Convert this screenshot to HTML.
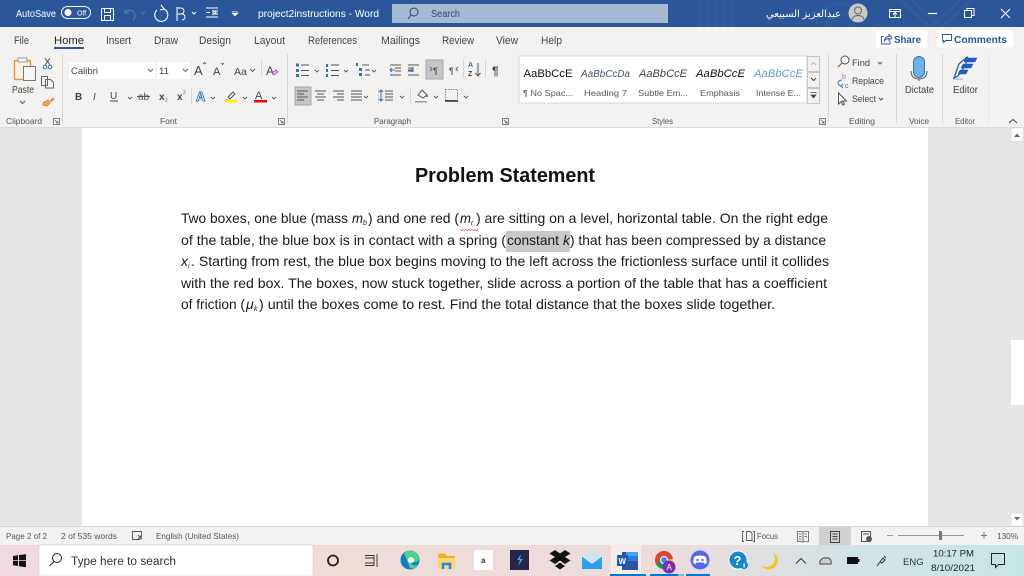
<!DOCTYPE html>
<html><head><meta charset="utf-8"><style>
html,body{margin:0;padding:0;background:#fff;width:1024px;height:576px;overflow:hidden}
svg{display:block;font-family:"Liberation Sans","Noto Sans CJK SC",sans-serif}
.d{font-size:14px;fill:#1a1a1a}
.r{font-size:10px;fill:#444}
.g{font-size:8px;fill:#555}
.s{font-size:8.5px;fill:#555}
.st{font-size:11px}
</style></head><body>
<svg width="1024" height="576" viewBox="0 0 1024 576" xmlns="http://www.w3.org/2000/svg">
<defs><linearGradient id="tk" x1="0" x2="1" y1="0" y2="0">
<stop offset="0" stop-color="#f0d9e2"/><stop offset=".3" stop-color="#eedcd6"/><stop offset=".66" stop-color="#ecdcdc"/><stop offset=".82" stop-color="#d3e2e6"/><stop offset="1" stop-color="#c8e5e6"/></linearGradient></defs>
<!-- background -->
<rect width="1024" height="576" fill="#e6e6e6"/>
<rect x="82" y="127" width="846" height="400" fill="#fff"/>
<!-- title bar -->
<rect width="1024" height="27" fill="#2b579a"/>
<g fill="none" stroke="#2f5c9e" stroke-width="3"><path d="M700 0v27M708 0v27M716 0v27M724 0v27M732 0v27"/><circle cx="840" cy="28" r="14"/><circle cx="840" cy="28" r="24"/><path d="M900 0l30 27M912 0l30 27M960 0l-30 27M972 0l-30 27"/></g>
<text x="16" y="17" font-size="10" fill="#fff" textLength="40" lengthAdjust="spacingAndGlyphs">AutoSave</text>
<rect x="61.500" y="6.500" width="29" height="12" rx="6" fill="none" stroke="#fff"/><circle cx="68" cy="12.500" r="3.500" fill="#fff"/><text x="77" y="15.500" font-size="7" fill="#fff">Off</text>
<g fill="none" stroke="#fff"><rect x="101.500" y="8.500" width="12" height="12"/><rect x="104.500" y="8.500" width="6" height="4"/><rect x="104.500" y="15.500" width="6" height="5"/></g>
<path d="M125 9v4h4M125 13c3-5 10-3 10 3 0 2-1 3-2 4" fill="none" stroke="#5679ad" stroke-width="1.200"/><path d="M141 12l2 2 2-2" fill="none" stroke="#5679ad"/>
<path d="M157 10a6.500 6.500 0 1 0 7-1M161 5l3 4-4 1" fill="none" stroke="#fff" stroke-width="1.100"/>
<path d="M177 7v14M177 8h4a3 3 0 0 1 0 6h-4M180 14h2a3 3 0 0 1 0 6" fill="none" stroke="#fff"/><path d="M192 12l2 2 2-2" fill="none" stroke="#fff"/>
<path d="M206 8h12M206 17h12M206 12.500h4M213 10.500v4l3-2zM214 11h4M214 14h4" fill="none" stroke="#fff"/>
<path d="M232 11.500h6M232 13l3 3 3-3z" fill="#fff" stroke="#fff" stroke-width=".6"/>
<text x="258" y="17" font-size="10" fill="#fff" textLength="121" lengthAdjust="spacingAndGlyphs">project2instructions  -  Word</text>
<rect x="392" y="4" width="276" height="19" fill="#a5b9d3"/>
<circle cx="414" cy="12" r="4" fill="none" stroke="#2b4a78"/><path d="M411 15l-3 4" stroke="#2b4a78"/>
<text x="431" y="17" font-size="10" fill="#2d4a75" textLength="29" lengthAdjust="spacingAndGlyphs">Search</text>
<text x="841" y="17" font-size="10" fill="#fff" textLength="75" lengthAdjust="spacingAndGlyphs" direction="rtl" font-family="'Liberation Sans','DejaVu Sans',sans-serif">عبدالعزيز السبيعي</text>
<circle cx="858" cy="13" r="9.500" fill="#c9c9c9"/><circle cx="858" cy="10.500" r="3.500" fill="none" stroke="#666"/><path d="M852 20c0-6 12-6 12 0" fill="none" stroke="#666"/>
<g fill="none" stroke="#fff"><rect x="889.500" y="9.500" width="11" height="8"/><path d="M889 11.500h11M895 17v-4M893 14.500l2-2 2 2"/><path d="M928 13.500h9" stroke-width="1.200"/><rect x="964.500" y="10.500" width="7" height="7"/><path d="M967 10.500v-2h7v7h-2"/><path d="M1001 9l9 9M1010 9l-9 9" stroke-width="1.100"/></g>
<!-- ribbon -->
<rect y="27" width="1024" height="100" fill="#f3f2f1"/>
<rect y="127" width="1024" height="1" fill="#dcdcdc"/>
<g class="st" fill="#444">
<text x="14" y="44" textLength="15" lengthAdjust="spacingAndGlyphs">File</text>
<text x="54" y="44" textLength="30" lengthAdjust="spacingAndGlyphs" fill="#2a2a2a">Home</text>
<text x="106" y="44" textLength="25" lengthAdjust="spacingAndGlyphs">Insert</text>
<text x="154" y="44" textLength="24" lengthAdjust="spacingAndGlyphs">Draw</text>
<text x="199" y="44" textLength="32" lengthAdjust="spacingAndGlyphs">Design</text>
<text x="254" y="44" textLength="31" lengthAdjust="spacingAndGlyphs">Layout</text>
<text x="308" y="44" textLength="49" lengthAdjust="spacingAndGlyphs">References</text>
<text x="381" y="44" textLength="39" lengthAdjust="spacingAndGlyphs">Mailings</text>
<text x="442" y="44" textLength="32" lengthAdjust="spacingAndGlyphs">Review</text>
<text x="496" y="44" textLength="22" lengthAdjust="spacingAndGlyphs">View</text>
<text x="541" y="44" textLength="21" lengthAdjust="spacingAndGlyphs">Help</text>
</g>
<rect x="54" y="47" width="30" height="2" fill="#2b579a"/>
<!-- share/comments -->
<rect x="875" y="30" width="53" height="18" fill="#fff" stroke="#eee"/>
<path d="M883.500 36.500h-2v7.500h8.500v-3M884.500 41c0-3 1.500-4.500 4.500-4.500v-2l3 3-3 3v-2c-2 0-3.500 1-4.500 2.500z" fill="none" stroke="#2b579a" stroke-width=".9"/>
<text x="894" y="43" font-size="10.500" font-weight="bold" fill="#2b579a" textLength="27" lengthAdjust="spacingAndGlyphs">Share</text>
<rect x="936" y="30" width="78" height="18" fill="#fff" stroke="#eee"/>
<path d="M942.500 34.500h9v6h-6l-2 2v-2h-1z" fill="none" stroke="#2b579a" stroke-width=".9"/>
<text x="954" y="43" font-size="10.500" font-weight="bold" fill="#2b579a" textLength="53" lengthAdjust="spacingAndGlyphs">Comments</text>
<!-- separators -->
<g fill="#d8d7d6"><rect x="62" y="54" width="1" height="69"/><rect x="287" y="54" width="1" height="69"/><rect x="828" y="54" width="1" height="69"/><rect x="896" y="54" width="1" height="69"/><rect x="942" y="54" width="1" height="69"/><rect x="988" y="54" width="1" height="69" fill="#e8e7e6"/></g>
<!-- clipboard -->
<rect x="14.500" y="60.500" width="16" height="19" rx="1" fill="#fbf3e8" stroke="#e8923e" stroke-width="1.400"/><rect x="18" y="58" width="9" height="4" fill="#f3f2f1" stroke="#888" stroke-width=".8"/><rect x="23.500" y="66.500" width="12" height="14" fill="#f6f6f6" stroke="#777"/>
<text x="12" y="93" class="r" textLength="22" lengthAdjust="spacingAndGlyphs">Paste</text><path d="M20 101l2.500 2.500 2.500-2.500" fill="none" stroke="#555"/>
<path d="M45 58l5 7M50 58l-5 7" stroke="#555" fill="none"/><circle cx="45" cy="67" r="1.800" fill="none" stroke="#2e75b6"/><circle cx="50" cy="67" r="1.800" fill="none" stroke="#2e75b6"/>
<path d="M41.500 76.500h6v9h-6zM45.500 79.500h5l3 3v5.500h-8z" fill="#f3f2f1" stroke="#666"/>
<path d="M43 103l5-3 2 3-3 3-4-1zM50 101l3-3 1 1-3 3" fill="#f2a24e" stroke="#d9792a" stroke-width=".8"/>
<text x="6" y="124" class="g" textLength="36" lengthAdjust="spacingAndGlyphs">Clipboard</text>
<g fill="none" stroke="#666" stroke-width=".8"><rect x="53.500" y="118.500" width="6" height="6"/><path d="M55 120l3 3M58 121v2h-2"/><rect x="278.500" y="118.500" width="6" height="6"/><path d="M280 120l3 3M283 121v2h-2"/><rect x="502.500" y="118.500" width="6" height="6"/><path d="M504 120l3 3M507 121v2h-2"/><rect x="819.500" y="118.500" width="6" height="6"/><path d="M821 120l3 3M824 121v2h-2"/></g>
<!-- font -->
<rect x="69" y="62" width="86" height="17" fill="#fff"/><rect x="157" y="62" width="33" height="17" fill="#fff"/>
<text x="71" y="74" font-size="9.500" fill="#444" textLength="27" lengthAdjust="spacingAndGlyphs">Calibri</text>
<text x="159" y="74" font-size="9.500" fill="#444">11</text>
<g fill="none" stroke="#555" stroke-width=".9"><path d="M148 69l2.500 2.500 2.500-2.500M183 69l2.500 2.500 2.500-2.500M250 69l2.500 2.500 2.500-2.500M128 97l2 2 2-2M211 97l2 2 2-2M243 97l2 2 2-2M272 97l2 2 2-2M315 70l2 2 2-2M344 70l2 2 2-2M372 70l2 2 2-2M364 96l2 2 2-2M400 96l2 2 2-2M434 96l2 2 2-2M464 96l2 2 2-2"/></g>
<text x="194" y="75" font-size="13" fill="#444">A</text><path d="M203 64l1.500-1.500 1.500 1.500" fill="none" stroke="#2e75b6"/>
<text x="213" y="75" font-size="11" fill="#444">A</text><path d="M221 63l1.500 1.500 1.500-1.500" fill="none" stroke="#2e75b6"/>
<text x="234" y="75" font-size="10.500" fill="#444">Aa</text>
<rect x="261" y="59" width="1" height="18" fill="#d8d7d6"/>
<text x="266" y="75" font-size="12" fill="#444">A</text><path d="M272 73l4-3 2 2-4 3z" fill="#e0b9e8" stroke="#9a3fb0" stroke-width=".7"/>
<text x="75" y="100" font-size="10" font-weight="bold" fill="#444">B</text>
<text x="93" y="100" font-size="10" font-style="italic" fill="#444">I</text>
<text x="110" y="99" font-size="10" fill="#444">U</text><path d="M110 101h8" stroke="#444"/>
<text x="138" y="100" font-size="10" fill="#555">ab</text><path d="M137 96.500h13" stroke="#555"/>
<text x="159" y="100" font-size="10" font-weight="bold" fill="#444">x</text><text x="165" y="102" font-size="5" fill="#2e75b6">2</text>
<text x="177" y="100" font-size="10" font-weight="bold" fill="#444">x</text><text x="183" y="94" font-size="5" fill="#2e75b6">2</text>
<rect x="191" y="88" width="1" height="16" fill="#d8d7d6"/>
<text x="196" y="101" font-size="13" font-weight="bold" fill="#fff" stroke="#2e75b6" stroke-width=".9">A</text>
<path d="M228 97l5-5 2 2-5 5zM226 100h2" fill="none" stroke="#555"/><rect x="225" y="100" width="12" height="2.500" fill="#ffec00"/>
<text x="255" y="99" font-size="11" fill="#444">A</text><rect x="254" y="100" width="13" height="2.500" fill="#f00"/>
<text x="160" y="124" class="g" textLength="17" lengthAdjust="spacingAndGlyphs">Font</text>
<!-- paragraph -->
<g stroke="#555" fill="none" stroke-width="1">
<path d="M301 65h8M301 70.500h8M301 75.500h8M331 65h8M331 70.500h8M331 75.500h8M362 65h7M365 70h5M365 75h5M390 65h11M395 68h6M395 71h6M390 75h11M408 65h11M408 68h6M408 71h6M408 75h11"/>
</g>
<g fill="#2e75b6"><rect x="296" y="63.500" width="3" height="3"/><rect x="296" y="69" width="3" height="3"/><rect x="296" y="74" width="3" height="3"/><rect x="326" y="64" width="2" height="3"/><rect x="326" y="69" width="2" height="3"/><rect x="326" y="74" width="2" height="3"/><rect x="356" y="63" width="2" height="3"/><rect x="359" y="68" width="3" height="3"/><rect x="359" y="73" width="3" height="3"/></g>
<path d="M390 70h5M392 68l-2 2 2 2M408 70h5M411 68l2 2-2 2" fill="none" stroke="#2e75b6"/>
<rect x="426" y="60" width="17" height="19" fill="#c8c6c4" stroke="#a9a7a5"/>
<text x="433" y="74" font-size="9" fill="#444">¶</text><path d="M430 67l2 2-2 2" fill="none" stroke="#2e75b6"/>
<text x="449" y="74" font-size="9" fill="#444">¶</text><path d="M458 67l-2 2 2 2" fill="none" stroke="#2e75b6"/>
<rect x="463" y="60" width="1" height="18" fill="#d8d7d6"/>
<text x="468" y="67" font-size="7" font-weight="bold" fill="#2e75b6">A</text><text x="468" y="76" font-size="7" font-weight="bold" fill="#444">Z</text><path d="M478 63v13M475.500 73l2.500 3 2.500-3" fill="none" stroke="#555"/>
<rect x="485" y="60" width="1" height="18" fill="#d8d7d6"/>
<text x="492" y="75" font-size="12" font-weight="bold" fill="#444">¶</text>
<rect x="295" y="87" width="16" height="18" fill="#c8c6c4" stroke="#a9a7a5"/>
<g stroke="#555" fill="none"><path d="M297 91h11M297 94h7M297 97h11M297 100h7M315 91h11M317 94h7M315 97h11M317 100h7M333 91h11M337 94h7M333 97h11M337 100h7M351 91h11M351 94h11M351 97h11M351 100h11M385 91h8M385 94h8M385 97h8M385 100h8"/></g>
<rect x="378" y="88" width="1" height="16" fill="#d8d7d6"/>
<path d="M381 90v11M379 92l2-2 2 2M379 99l2 2 2-2" fill="none" stroke="#2e75b6"/>
<rect x="410" y="88" width="1" height="16" fill="#d8d7d6"/>
<path d="M418 95l4-5 5 5-4 3z" fill="none" stroke="#555"/><rect x="415" y="101" width="12" height="1.500" fill="#999"/><path d="M427 94l1 3h-2z" fill="#2e75b6"/>
<rect x="445.500" y="89.500" width="12" height="11" fill="none" stroke="#888" stroke-dasharray="1.500 1"/><path d="M445 101h13" stroke="#222" stroke-width="1.400"/>
<text x="374" y="124" class="g" textLength="37" lengthAdjust="spacingAndGlyphs">Paragraph</text>
<!-- styles -->
<rect x="519" y="56" width="288" height="47" fill="#fff" stroke="#d5d4d3"/>
<text x="523.500" y="77" font-size="11" fill="#111" textLength="49" lengthAdjust="spacingAndGlyphs">AaBbCcE</text>
<text x="581" y="77" font-size="10" font-style="italic" fill="#44546a" textLength="49" lengthAdjust="spacingAndGlyphs">AaBbCcDa</text>
<text x="639" y="77" font-size="11" font-style="italic" fill="#444" textLength="48" lengthAdjust="spacingAndGlyphs">AaBbCcE</text>
<text x="696" y="77" font-size="11" font-style="italic" fill="#111" textLength="49" lengthAdjust="spacingAndGlyphs">AaBbCcE</text>
<text x="754" y="77" font-size="11" font-style="italic" fill="#5b9bd5" textLength="49" lengthAdjust="spacingAndGlyphs">AaBbCcE</text>
<text x="523" y="96" class="s" textLength="50" lengthAdjust="spacingAndGlyphs">¶ No Spac...</text>
<text x="584" y="96" class="s" textLength="43" lengthAdjust="spacingAndGlyphs">Heading 7</text>
<text x="638" y="96" class="s" textLength="50" lengthAdjust="spacingAndGlyphs">Subtle Em...</text>
<text x="700" y="96" class="s" textLength="40" lengthAdjust="spacingAndGlyphs">Emphasis</text>
<text x="756" y="96" class="s" textLength="45" lengthAdjust="spacingAndGlyphs">Intense E...</text>
<g fill="#f3f2f1" stroke="#c8c6c4"><rect x="807.500" y="56.500" width="12" height="15"/><rect x="807.500" y="72.500" width="12" height="15"/><rect x="807.500" y="88.500" width="12" height="15"/></g>
<path d="M811 65l2.500-2.500 2.500 2.500" fill="none" stroke="#bbb"/><path d="M811 78l2.500 2.500 2.500-2.500" fill="none" stroke="#444"/><path d="M810.500 92.500h6M811 95l2.500 3 2.500-3z" fill="#444" stroke="#444" stroke-width=".7"/>
<text x="652" y="124" class="g" textLength="21" lengthAdjust="spacingAndGlyphs">Styles</text>
<!-- editing -->
<circle cx="845" cy="60" r="4" fill="none" stroke="#555"/><path d="M842 63l-4 4" stroke="#555"/>
<text x="852" y="66" font-size="9.500" fill="#444" textLength="18" lengthAdjust="spacingAndGlyphs">Find</text><path d="M878 62l2 2 2-2" fill="none" stroke="#555"/>
<path d="M842 80c-3 0-4 2-4 3s1 3 4 3M843 84l-2 2 2 2" fill="none" stroke="#2e75b6"/><text x="842" y="79" font-size="7" fill="#c269c9">b</text><text x="845" y="88" font-size="7" fill="#2e75b6">c</text>
<text x="852" y="84" font-size="9.500" fill="#444" textLength="32" lengthAdjust="spacingAndGlyphs">Replace</text>
<path d="M838.500 93v11l2.500-2.500 2 3.500 1.500-1-2-3h4z" fill="#fff" stroke="#555"/>
<text x="852" y="102" font-size="9.500" fill="#444" textLength="24" lengthAdjust="spacingAndGlyphs">Select</text><path d="M879 98l2 2 2-2" fill="none" stroke="#555"/>
<text x="849" y="124" class="g" textLength="26" lengthAdjust="spacingAndGlyphs">Editing</text>
<rect x="913.500" y="56.500" width="11" height="21" rx="5.500" fill="#6cb2e8" stroke="#2e75b6"/><path d="M911 71c0 6 4 8 8 8s8-2 8-8M919 79v2" fill="none" stroke="#555"/>
<text x="905" y="93" class="r" textLength="29" lengthAdjust="spacingAndGlyphs">Dictate</text>
<text x="909" y="124" class="g" textLength="20" lengthAdjust="spacingAndGlyphs">Voice</text>
<path d="M954 78l5-14 8-7 1 1-3 8-7 10z" fill="#fff" stroke="#1e5fbf" stroke-width="1.300"/><path d="M965 58h12l-2 4h-11zM963 64h10l-2 4h-10zM960 70h8l-2 4h-8zM953 79h10" fill="#1e5fbf" stroke="#1e5fbf" stroke-width=".5"/>
<text x="953" y="93" class="r" textLength="25" lengthAdjust="spacingAndGlyphs">Editor</text>
<text x="955" y="124" class="g" textLength="20" lengthAdjust="spacingAndGlyphs">Editor</text>
<path d="M1009 123l4-3.500 4 3.500" fill="none" stroke="#444"/>
<!-- document -->
<text x="415" y="182" font-size="20" font-weight="bold" fill="#111" textLength="180" lengthAdjust="spacingAndGlyphs">Problem Statement</text>
<rect x="506" y="231" width="64" height="21" fill="#c8c8c8"/>
<g class="d">
<text x="181" y="223" textLength="167" lengthAdjust="spacingAndGlyphs">Two boxes, one blue (mass</text>
<text x="352" y="223" font-style="italic" textLength="11" lengthAdjust="spacingAndGlyphs">m</text><text x="363" y="225" font-size="7" font-style="italic">b</text>
<text x="368" y="223" textLength="91" lengthAdjust="spacingAndGlyphs">) and one red (</text>
<text x="460" y="223" font-style="italic" textLength="11" lengthAdjust="spacingAndGlyphs">m</text><text x="471" y="225" font-size="7" font-style="italic">r</text>
<text x="476" y="223" textLength="352" lengthAdjust="spacingAndGlyphs">) are sitting on a level, horizontal table. On the right edge</text>
<text x="181" y="245" textLength="325" lengthAdjust="spacingAndGlyphs">of the table, the blue box is in contact with a spring (</text>
<text x="507" y="245" textLength="52" lengthAdjust="spacingAndGlyphs">constant</text><text x="563" y="245" font-style="italic">k</text>
<text x="570" y="245" textLength="256" lengthAdjust="spacingAndGlyphs">) that has been compressed by a distance</text>
<text x="181" y="266" font-style="italic">x</text><text x="188" y="268" font-size="7" font-style="italic">i</text>
<text x="191" y="266" textLength="638" lengthAdjust="spacingAndGlyphs">. Starting from rest, the blue box begins moving to the left across the frictionless surface until it collides</text>
<text x="181" y="288" textLength="646" lengthAdjust="spacingAndGlyphs">with the red box. The boxes, now stuck together, slide across a portion of the table that has a coefficient</text>
<text x="181" y="309" textLength="64" lengthAdjust="spacingAndGlyphs">of friction (</text>
<text x="246" y="309" font-style="italic">μ</text><text x="254" y="311" font-size="7" font-style="italic">k</text>
<text x="259" y="309" textLength="516" lengthAdjust="spacingAndGlyphs">) until the boxes come to rest. Find the total distance that the boxes slide together.</text>
</g>
<path d="M460 229.500l1.500 1 1.500-1 1.500 1 1.500-1 1.500 1 1.500-1 1.500 1 1.500-1 1.500 1 1.500-1 1.500 1 1.500-1" fill="none" stroke="#d33" stroke-width=".7"/>
<!-- scrollbar -->
<rect x="1011" y="128" width="13" height="399" fill="#e6e6e6"/>
<rect x="1011" y="128" width="12" height="13" fill="#fff" stroke="#ccc" stroke-width=".5"/><path d="M1014 137l3-3.500 3 3.500z" fill="#666"/>
<rect x="1011" y="513" width="12" height="13" fill="#fff" stroke="#ccc" stroke-width=".5"/><path d="M1014 517l3 3.500 3-3.500z" fill="#666"/>
<rect x="1011" y="340" width="13" height="65" fill="#fff"/>
<!-- status bar -->
<rect y="527" width="1024" height="18" fill="#f3f2f1"/><rect y="526" width="1024" height="1" fill="#d6d6d6"/>
<g font-size="8.500" fill="#555">
<text x="6" y="539" textLength="41" lengthAdjust="spacingAndGlyphs">Page 2 of 2</text>
<text x="61" y="539" textLength="56" lengthAdjust="spacingAndGlyphs">2 of 535 words</text>
<text x="156" y="539" textLength="83" lengthAdjust="spacingAndGlyphs">English (United States)</text>
<text x="757" y="539" textLength="21" lengthAdjust="spacingAndGlyphs">Focus</text>
<text x="997" y="539" textLength="21" lengthAdjust="spacingAndGlyphs">130%</text>
</g>
<path d="M132.500 531.500h9v5l-2 3h-7zM138 535l4 4M142 535l-4 4" fill="none" stroke="#555" stroke-width=".9"/>
<path d="M744 531.500h-1.500v10h1.500M753 531.500h1.500v10H753M746.500 531.500h4l1.500 2v7h-5.500z" fill="none" stroke="#555" stroke-width=".9"/>
<rect x="819" y="527" width="32" height="18" fill="#d2d0ce"/>
<path d="M797.500 531.500h4.500l1 1 1-1h4.500v10h-4.500l-1 .5-1-.5h-4.500zM803 532v9M799 534h2.500M799 536.500h2.500M799 539h2.500M804.500 534h2.500M804.500 536.500h2.500" fill="none" stroke="#555" stroke-width=".8"/>
<path d="M830.500 531.500h9v11h-9zM832.500 534h5M832.500 536.500h5M832.500 539h5" fill="none" stroke="#444"/>
<path d="M861.500 531.500h9v10h-9zM863 534h6" fill="none" stroke="#555"/><circle cx="869" cy="539" r="3" fill="#555"/>
<path d="M887 535.500h6M898 535.500h66" stroke="#999"/><rect x="939" y="531" width="3" height="9" fill="#777"/><path d="M981 535.500h6M984 532.500v6" stroke="#777"/>
<!-- taskbar -->
<rect y="545" width="1024" height="31" fill="url(#tk)"/>
<path d="M13 556l5-.7v5h-5zM19 555.100l7-1v6.200h-7zM13 561h5v5l-5-.7zM19 561h7v6.200l-7-1z" fill="#111"/>
<rect x="39" y="545" width="274" height="31" fill="#fff" stroke="#ccc" stroke-width=".6"/>
<circle cx="57" cy="558" r="4.500" fill="none" stroke="#222"/><path d="M54 561.500l-4.500 4.500" stroke="#222"/>
<text x="71" y="565" font-size="11.500" fill="#333" textLength="105" lengthAdjust="spacingAndGlyphs">Type here to search</text>
<circle cx="333" cy="560.500" r="5" fill="none" stroke="#222" stroke-width="1.800"/>
<path d="M365 555.500h9v10h-9M365 558h9M365 563h9M377 554v13" fill="none" stroke="#333" stroke-width=".9"/>
<circle cx="410" cy="560" r="9.500" fill="#0f7dc9"/><path d="M404 553a9 9 0 0 1 15 6c0 2-2 3-5 3h-3c0 3 3 4 7 3-2 3-5 4-8 3" fill="#4fd28a"/><circle cx="411" cy="560" r="3" fill="#fff"/>
<path d="M438 553.500h7l2 2.500h8v3h-17z" fill="#eeb422"/><rect x="438" y="558" width="17" height="11" fill="#f8d775"/><path d="M443 569v-5h7v5" fill="none" stroke="#2b88d8" stroke-width="2.500"/>
<rect x="474" y="550" width="19" height="20" fill="#fff"/><text x="481" y="563" font-size="8" font-weight="bold" fill="#333">a</text>
<rect x="510" y="550" width="19" height="20" fill="#24264a"/><path d="M521 554l-4 6h3l-2 6 5-7h-3z" fill="#2ea8f0"/>
<path d="M555 550l-5.500 3.500 5.500 3.500-5.500 3.500 5.500 3.500 5-3.500 5 3.500 5.500-3.500-5.500-3.500 5.500-3.500-5.500-3.500-5 3.500zM555 566l5 3.500 5-3.500-5-3.500z" fill="#111"/>
<path d="M582 557l10-6 10 6v12h-20z" fill="#1b86d6"/><path d="M582 557l10 7 10-7v-1l-10-5-10 5z" fill="#c9e5f7"/><path d="M582 569v-11l10 6 10-6v11z" fill="#2aa0ec"/>
<rect x="611" y="545" width="30" height="31" fill="#f6ece8"/><rect x="610" y="574" width="36" height="2" fill="#0078d4"/><rect x="650" y="574" width="28" height="2" fill="#0078d4"/><rect x="678" y="574" width="6" height="2" fill="#7fb8e0"/><rect x="686" y="574" width="24" height="2" fill="#0078d4"/>
<rect x="622" y="552" width="16" height="18" fill="#2b579a"/><rect x="626" y="552" width="12" height="4" fill="#41a5ee"/><rect x="626" y="556" width="12" height="5" fill="#2b7cd3"/><rect x="617" y="555" width="11" height="11" fill="#185abd"/><text x="618.500" y="564" font-size="8" font-weight="bold" fill="#fff">W</text>
<circle cx="664" cy="560" r="9" fill="#db4437"/><path d="M664 560l-8 4a9 9 0 0 0 11 4.500z" fill="#0f9d58"/><path d="M664 560l9-1a9 9 0 0 1-6 9.500z" fill="#ffcd40"/><circle cx="664" cy="560" r="3.500" fill="#4285f4" stroke="#fff"/>
<circle cx="669" cy="567" r="6.500" fill="#7b2fa8"/><text x="666.500" y="570" font-size="8" fill="#fff">A</text>
<circle cx="700" cy="560" r="9.500" fill="#5865f2"/><path d="M694 557c3-2 9-2 12 0l1 6-2.500 1-1-1.500h-7l-1 1.500-2.500-1z" fill="#fff"/><circle cx="697.500" cy="560" r="1.200" fill="#5865f2"/><circle cx="702.500" cy="560" r="1.200" fill="#5865f2"/>
<circle cx="738" cy="560" r="9" fill="#1687c9" stroke="#fff"/><text x="733.500" y="565" font-size="13" font-weight="bold" fill="#fff">?</text><circle cx="744" cy="565" r="4" fill="#1687c9"/><rect x="743.500" y="563" width="1.200" height="4.500" fill="#fff"/>
<path d="M772 552a9 9 0 1 1-11 13 8.500 8.500 0 0 0 11-13z" fill="#f6c612"/>
<path d="M796 563.500l5-5 5 5" fill="none" stroke="#333"/>
<path d="M820 564c-1-4 3-7 6-6 3-1 6 2 5 6z" fill="#ccc" stroke="#444"/>
<rect x="847" y="557" width="11" height="7" fill="#111"/><rect x="858" y="559" width="1.500" height="3" fill="#111"/>
<path d="M877 566l3-4M880 562l3-4 2 2-3 3zM884 556l2 2" fill="none" stroke="#333"/>
<text x="903" y="565" font-size="9.500" fill="#333">ENG</text>
<text x="933" y="556.500" font-size="9.500" fill="#222" textLength="41" lengthAdjust="spacingAndGlyphs">10:17 PM</text>
<text x="931" y="571" font-size="9.500" fill="#222" textLength="44" lengthAdjust="spacingAndGlyphs">8/10/2021</text>
<path d="M991.500 553.500h13v11h-6l-3 3v-3h-4z" fill="none" stroke="#222"/>
</svg>
</body></html>
